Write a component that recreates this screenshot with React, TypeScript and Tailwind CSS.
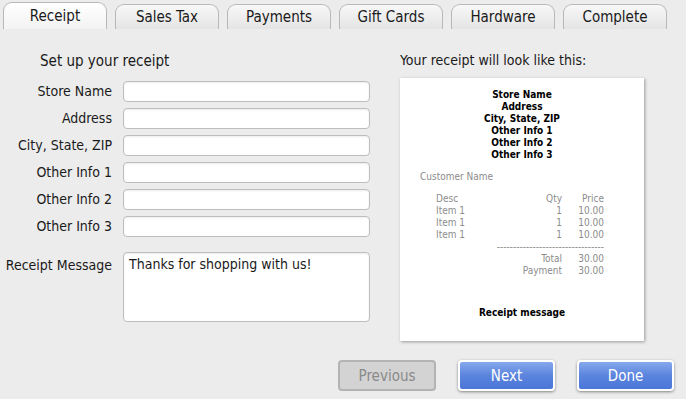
import { useState } from "react";

const tabs = ["Receipt", "Sales Tax", "Payments", "Gift Cards", "Hardware", "Complete"];
const fields = ["Store Name", "Address", "City, State, ZIP", "Other Info 1", "Other Info 2", "Other Info 3"];
const font = "font-['Tahoma','DejaVu_Sans_Condensed','DejaVu_Sans',sans-serif]";

function App() {
  const [active, setActive] = useState(0);
  const [message, setMessage] = useState("Thanks for shopping with us!");

  return (
    <div className={`w-[686px] h-[399px] bg-[#ececec] flex flex-col text-[#1a1a1a] ${font}`}>
      {/* Tabs */}
      <div className="h-[29px] flex items-end gap-[8px] pl-[3px]">
        {tabs.map((t, i) => (
          <div
            key={t}
            onClick={() => setActive(i)}
            className={
              i === active
                ? "w-[104px] h-[27px] flex items-center justify-center rounded-t-[9px] border border-b-0 border-[#b8b8b8] bg-gradient-to-b from-white to-[#f3f3f3] text-[15px] cursor-pointer"
                : "w-[104px] h-[25px] flex items-center justify-center rounded-t-[9px] border border-b-0 border-[#b8b8b8] bg-gradient-to-b from-[#f8f8f8] to-[#e4e4e4] text-[15px] cursor-pointer"
            }
          >
            {t}
          </div>
        ))}
      </div>

      <div className="flex">
        {/* Form */}
        <div className="w-[400px] flex flex-col pl-[10px]">
          <div className="mt-[20px] h-[24px] leading-[24px] pl-[30px] text-[15px]">Set up your receipt</div>
          <div className="mt-[8px] flex flex-col gap-[6px]">
            {fields.map((f) => (
              <div key={f} className="flex items-center h-[21px]">
                <label className="w-[103px] text-right text-[14px] pr-[1px]">{f}</label>
                <input className="ml-[10px] w-[247px] h-[21px] bg-white border border-[#bdbdbd] rounded-[4px] shadow-[inset_0_1px_2px_rgba(0,0,0,0.08)] px-[5px] text-[14px] outline-none" />
              </div>
            ))}
          </div>
          <div className="mt-[15px] flex items-start">
            <div className="w-[103px] shrink-0 flex justify-end pt-[3px] pr-[1px]">
              <label className="whitespace-nowrap text-[14px]">Receipt Message</label>
            </div>
            <textarea
              value={message}
              onChange={(e) => setMessage(e.target.value)}
              className="ml-[10px] w-[247px] h-[70px] bg-white border border-[#bdbdbd] rounded-[4px] shadow-[inset_0_1px_2px_rgba(0,0,0,0.08)] px-[5px] py-[2px] text-[14px] leading-[18px] resize-none outline-none"
            />
          </div>
        </div>

        {/* Preview */}
        <div className="flex flex-col">
          <div className="mt-[20px] h-[22px] leading-[22px] text-[14px]">Your receipt will look like this:</div>
          <div className="mt-[7px] w-[244px] h-[263px] bg-white shadow-[1px_1px_3px_rgba(0,0,0,0.35)] flex flex-col text-[10px] leading-[12px]">
            <div className="pt-[11px] flex flex-col items-center font-bold text-black">
              <span>Store Name</span>
              <span>Address</span>
              <span>City, State, ZIP</span>
              <span>Other Info 1</span>
              <span>Other Info 2</span>
              <span>Other Info 3</span>
            </div>
            <div className="mt-[10px] pl-[20px] text-[#8c8c8c]">Customer Name</div>
            <div className="mt-[10px] pl-[36px] pr-[40px] text-[#8c8c8c]">
              {["Desc", "Item 1", "Item 1", "Item 1"].map((d, i) => (
                <div key={i} className="flex">
                  <span className="flex-1">{d}</span>
                  <span className="w-[30px] text-right">{i === 0 ? "Qty" : "1"}</span>
                  <span className="w-[42px] text-right">{i === 0 ? "Price" : "10.00"}</span>
                </div>
              ))}
              <div className="flex justify-end">
                <span className="whitespace-nowrap">---------------------------------</span>
              </div>
              <div className="flex justify-end">
                <span className="text-right">Total</span>
                <span className="w-[42px] text-right">30.00</span>
              </div>
              <div className="flex justify-end">
                <span className="text-right">Payment</span>
                <span className="w-[42px] text-right">30.00</span>
              </div>
            </div>
            <div className="mt-[30px] text-center font-bold text-black">Receipt message</div>
          </div>
        </div>
      </div>

      {/* Buttons */}
      <div className="mt-auto mb-[8px] flex justify-end gap-[22px] pr-[12px]">
        <button className="w-[98px] h-[31px] pt-[2px] rounded-[4px] border-2 border-[#b3b3b3] bg-[#d3d3d3] text-[15px] text-[#8a8a8a]">
          Previous
        </button>
        <button className="w-[97px] h-[31px] pt-[2px] rounded-[4px] border-2 border-white bg-gradient-to-b from-[#86a8ec] via-[#5b84dd] to-[#4a76d8] text-[15px] text-white shadow-[0_1px_3px_rgba(0,0,0,0.45)]">
          Next
        </button>
        <button className="w-[97px] h-[31px] pt-[2px] rounded-[4px] border-2 border-white bg-gradient-to-b from-[#86a8ec] via-[#5b84dd] to-[#4a76d8] text-[15px] text-white shadow-[0_1px_3px_rgba(0,0,0,0.45)]">
          Done
        </button>
      </div>
    </div>
  );
}

export default App;
